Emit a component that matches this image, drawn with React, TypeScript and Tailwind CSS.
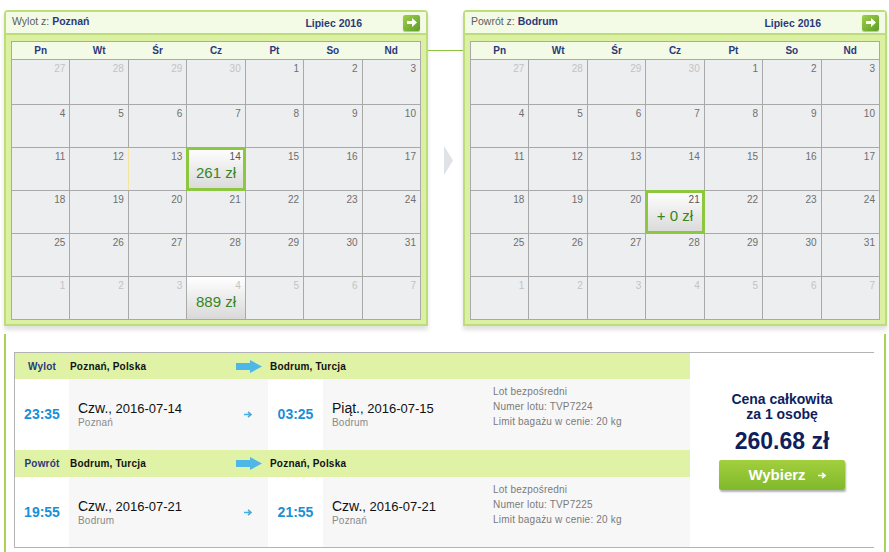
import React from "react";

type Day = {
  n: number;
  out: boolean;
  price?: string;
  picked?: boolean;
  hover?: boolean;
};

const DAY_NAMES = ["Pn", "Wt", "Śr", "Cz", "Pt", "So", "Nd"];

// July 2016 grid, Monday first: 27–30 June, 1–31 July, 1–7 August
function julyGrid(extra: Record<string, Partial<Day>>): Day[] {
  const days: Day[] = [];
  for (let i = 0; i < 42; i++) {
    let n: number;
    let key: string;
    if (i < 4) {
      n = 27 + i;
      key = `6-${n}`;
    } else if (i - 3 <= 31) {
      n = i - 3;
      key = `7-${n}`;
    } else {
      n = i - 34;
      key = `8-${n}`;
    }
    days.push({ n, out: !key.startsWith("7-"), ...extra[key] });
  }
  return days;
}

const outbound = julyGrid({
  "7-13": { hover: true },
  "7-14": { price: "261 zł", picked: true },
  "8-4": { price: "889 zł" },
});

const inbound = julyGrid({
  "7-21": { price: "+ 0 zł", picked: true },
});

function NextButton() {
  return (
    <button
      type="button"
      className="flex h-[16px] w-[17px] items-center justify-center rounded-[2px] bg-linear-to-br from-[#9fd14a] to-[#5f9d27] shadow-[0_1px_1px_rgba(0,0,0,0.25)]"
    >
      <svg width="10" height="9" viewBox="0 0 10 9">
        <path d="M0 3 H5 V0 L10 4.5 L5 9 V6 H0 Z" fill="#fff" />
      </svg>
    </button>
  );
}

function DayCell({ day }: { day: Day }) {
  const bg = day.price
    ? "bg-linear-to-b from-white to-[#d9d9d9]"
    : "bg-[#eceef0]";
  const ring = day.picked
    ? "relative z-10 outline-3 outline-[#8dc63f] -outline-offset-2"
    : "";
  const hover = day.hover ? "shadow-[-1px_0_0_#f4e59c]" : "";
  const numColor = day.out ? "text-[#c3c3c3]" : day.picked ? "text-[#555]" : "text-[#6f6f6f]";

  return (
    <div className={`flex flex-col ${bg} ${ring} ${hover}`}>
      <div className={`pr-[4px] pt-[3px] text-right text-[10px] leading-[12px] ${numColor}`}>{day.n}</div>
      {day.price && (
        <div className="mt-[1px] text-center text-[15px] leading-[18px] text-[#378520]">{day.price}</div>
      )}
    </div>
  );
}

function CalendarPanel({ label, city, days }: { label: string; city: string; days: Day[] }) {
  return (
    <div className="w-[424px] h-[316px] rounded-t-[4px] border-2 border-[#bcdd77] bg-[#dcf0a4] shadow-[0_4px_4px_rgba(0,0,0,0.12)]">
      <div className="flex h-[23px] items-center border-b-2 border-[#bcdd77] bg-[#f3fbe6] pl-[6px] pr-[6px] text-[10.5px]">
        <span className="-mt-[1px] flex-1 text-[#5a5e63]">
          {label} <b className="text-[#2b397a]">{city}</b>
        </span>
        <span className="mr-[41px] mt-[3px] font-bold text-[#2b397a]">Lipiec 2016</span>
        <NextButton />
      </div>
      <div className="px-[5px] pb-[4px] pt-[6px]">
        <div className="border border-[#a9a9a9] bg-[#a9a9a9]">
          <div className="grid h-[17px] grid-cols-7 gap-px bg-[#f3fae6]">
            {DAY_NAMES.map((d) => (
              <div key={d} className="flex items-center justify-center text-[10px] font-bold text-[#2b397a]">
                {d}
              </div>
            ))}
          </div>
          <div className="grid grid-cols-7 grid-rows-[44px_repeat(5,42px)] gap-px pt-px">
            {days.map((day, i) => (
              <DayCell key={i} day={day} />
            ))}
          </div>
        </div>
      </div>
    </div>
  );
}

function BigArrow() {
  return (
    <svg width="26" height="13" viewBox="0 0 26 13">
      <path d="M0 3 H14 V0 L26 6.5 L14 13 V10 H0 Z" fill="#4fb6e8" />
    </svg>
  );
}

function SmallArrow({ color }: { color: string }) {
  return (
    <svg width="8" height="7" viewBox="0 0 8 7" fill="none" stroke={color} strokeWidth="1.6">
      <path d="M0 3.5 H7 M4 0.8 L7 3.5 L4 6.2" />
    </svg>
  );
}

function LegHeader({ label, from, to, tall }: { label: string; from: string; to: string; tall?: boolean }) {
  return (
    <div className={`flex items-center bg-[#dff2a6] text-[10px] font-bold tracking-[0.2px] ${tall ? "h-[27px]" : "h-[26px]"}`}>
      <div className="w-[54px] text-center text-[#2b397a]">{label}</div>
      <div className="flex w-[199px] items-center justify-between pl-[1px] pr-[6px] text-[#111]">
        <span>{from}</span>
        <BigArrow />
      </div>
      <div className="pl-[2px] text-[#111]">{to}</div>
    </div>
  );
}

type Stop = { time: string; day: string; date: string; city: string };

function LegBody({
  dep,
  arr,
  flight,
  tall,
}: {
  dep: Stop;
  arr: Stop;
  flight: string;
  tall?: boolean;
}) {
  return (
    <div className={`flex ${tall ? "h-[71px]" : "h-[70px]"}`}>
      <div className="flex w-[54px] items-center justify-center bg-white text-[14px] font-bold text-[#1b8fd6]">
        {dep.time}
      </div>
      <div className="flex w-[199px] items-center justify-between bg-[#f7f7f7] pl-[9px] pr-[16px]">
        <StopText stop={dep} />
        <SmallArrow color="#45aee3" />
      </div>
      <div className="flex w-[55px] items-center justify-center bg-white text-[14px] font-bold text-[#1b8fd6]">
        {arr.time}
      </div>
      <div className="flex flex-1 bg-[#f7f7f7] pl-[9px]">
        <div className="flex w-[161px] items-center">
          <StopText stop={arr} />
        </div>
        <div className="pt-[5px] text-[10px] leading-[15px] tracking-[0.2px] text-[#7a7a7a]">
          <div>Lot bezpośredni</div>
          <div>Numer lotu: {flight}</div>
          <div>Limit bagażu w cenie: 20 kg</div>
        </div>
      </div>
    </div>
  );
}

function StopText({ stop }: { stop: Stop }) {
  return (
    <div className="flex flex-col">
      <span className="text-[13px] leading-[16px] text-[#111]">
        <span className="text-[14px]">{stop.day}</span>, {stop.date}
      </span>
      <span className="text-[10px] leading-[12px] tracking-[0.2px] text-[#8a8a8a]">{stop.city}</span>
    </div>
  );
}

export default function App() {
  return (
    <div className="h-[552px] w-[889px] overflow-hidden bg-white font-['Liberation_Sans',Arial,sans-serif]">
      {/* calendars */}
      <div className="flex pl-[4px] pt-[10px]">
        <CalendarPanel label="Wylot z:" city="Poznań" days={outbound} />
        <div className="flex w-[35px] flex-col">
          <div className="mt-[40px] h-px bg-[#8fc43e]" />
          <svg className="ml-[16px] mt-[95px]" width="9" height="29" viewBox="0 0 9 29">
            <polygon points="0,0 9,14.5 0,29" fill="#dfe3e7" />
          </svg>
        </div>
        <CalendarPanel label="Powrót z:" city="Bodrum" days={inbound} />
      </div>

      {/* flight summary */}
      <div className="ml-[4px] mt-[8px] h-[219px] w-[882px] border-x-2 border-[#a9d257] pl-[8px] pr-[10px] pt-[18px]">
        <div className="flex h-[196px] border-y border-l border-[#b3b3b3]">
          <div className="flex w-[675px] flex-col">
            <LegHeader label="Wylot" from="Poznań, Polska" to="Bodrum, Turcja" />
            <LegBody
              tall
              flight="TVP7224"
              dep={{ time: "23:35", day: "Czw.", date: "2016-07-14", city: "Poznań" }}
              arr={{ time: "03:25", day: "Piąt.", date: "2016-07-15", city: "Bodrum" }}
            />
            <LegHeader tall label="Powrót" from="Bodrum, Turcja" to="Poznań, Polska" />
            <LegBody
              flight="TVP7225"
              dep={{ time: "19:55", day: "Czw.", date: "2016-07-21", city: "Bodrum" }}
              arr={{ time: "21:55", day: "Czw.", date: "2016-07-21", city: "Poznań" }}
            />
          </div>
          <div className="flex flex-1 flex-col items-center bg-white pt-[39px] text-[#0f1f5e]">
            <div className="text-center text-[14px] font-bold leading-[15px]">
              Cena całkowita
              <br />
              za 1 osobę
            </div>
            <div className="mt-[6px] text-[23px] font-bold leading-[26px]">260.68 zł</div>
            <button
              type="button"
              className="mt-[6px] flex h-[30px] w-[126px] items-center justify-center gap-[12px] rounded-[2px] bg-linear-to-b from-[#a2cf3d] to-[#80b92b] pl-[10px] text-[15px] font-bold text-white shadow-[1px_2px_2px_rgba(0,0,0,0.3)]"
            >
              Wybierz
              <SmallArrow color="#fff" />
            </button>
          </div>
        </div>
      </div>
    </div>
  );
}
